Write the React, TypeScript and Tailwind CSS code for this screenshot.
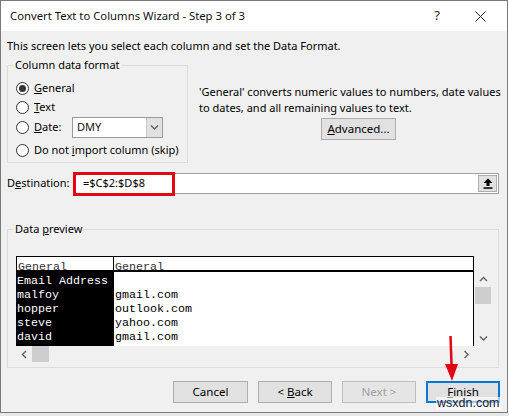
import React from "react"

const UI = "font-['Noto_Sans',sans-serif]"
const MONO = "font-['Liberation_Mono','Courier_New',monospace]"

function Radio({ checked = false }: { checked?: boolean }) {
  return (
    <span className="w-[13px] h-[13px] shrink-0 rounded-full border border-[#333] bg-white flex items-center justify-center">
      {checked && <span className="w-[7px] h-[7px] rounded-full bg-[#333]" />}
    </span>
  )
}

function Chevron({ dir }: { dir: "up" | "down" | "left" | "right" }) {
  const d = {
    up: "M1 5 L4.5 1.5 L8 5",
    down: "M1 1.5 L4.5 5 L8 1.5",
    left: "M5 1 L1.5 4.5 L5 8",
    right: "M1.5 1 L5 4.5 L1.5 8",
  }[dir]
  const vertical = dir === "up" || dir === "down"
  return (
    <svg width={vertical ? 9 : 7} height={vertical ? 7 : 9} viewBox={vertical ? "0 0 9 7" : "0 0 7 9"}>
      <path d={d} fill="none" stroke="#606060" strokeWidth="1.4" />
    </svg>
  )
}

function Btn({ children, disabled = false, primary = false, w = "w-[75px]" }: {
  children: React.ReactNode
  disabled?: boolean
  primary?: boolean
  w?: string
}) {
  return (
    <div
      className={`${w} h-[22px] flex items-center justify-center text-[11.5px] ${
        primary
          ? "border-2 border-[#0078d7] bg-[#e1e1e1] text-black"
          : disabled
          ? "border border-[#bfbfbf] bg-[#e5e5e5] text-[#a0a0a0]"
          : "border border-[#adadad] bg-[#e1e1e1] text-black"
      }`}
    >
      {children}
    </div>
  )
}

const ROWS = [
  ["Email Address", ""],
  ["malfoy", "gmail.com"],
  ["hopper", "outlook.com"],
  ["steve", "yahoo.com"],
  ["david", "gmail.com"],
]

export default function App() {
  return (
    <div className={`w-[509px] h-[416px] bg-white relative overflow-hidden ${UI} text-[11px] text-black`}>
      <div className="w-[508px] h-[413px] border border-[#7a7a7a] bg-[#f0f0f0] flex flex-col">
        {/* title bar */}
        <div className="h-[30px] bg-white flex items-center shrink-0">
          <span className="ml-[9px] text-[11.3px] text-[#111]">Convert Text to Columns Wizard - Step 3 of 3</span>
          <span className="ml-auto mr-[35px] text-[13px] text-[#222]">?</span>
          <svg width="11" height="11" viewBox="0 0 11 11" className="mr-[21px]">
            <path d="M0.5 0.5 L10.5 10.5 M10.5 0.5 L0.5 10.5" stroke="#222" strokeWidth="1" />
          </svg>
        </div>

        <div className="px-[6px] pt-[7px] h-[23px] leading-[16px]">
          This screen lets you select each column and set the Data Format.
        </div>

        {/* format + description */}
        <div className="flex mt-[11px] h-[98px]">
          <div className="relative ml-[6px] w-[181px] h-[98px] border border-[#dcdcdc]">
            <span className="absolute left-[5px] top-[-9px] px-[2px] bg-[#f0f0f0] leading-[16px]">Column data format</span>
            <div className="flex flex-col pl-[8px] pt-[13px]">
              <div className="h-[18px] flex items-center gap-[5px]">
                <Radio checked />
                <span><u>G</u>eneral</span>
              </div>
              <div className="h-[20px] flex items-center gap-[5px]">
                <Radio />
                <span><u>T</u>ext</span>
              </div>
              <div className="h-[21px] flex items-center">
                <Radio />
                <span className="ml-[5px] w-[38px]"><u>D</u>ate:</span>
                <div className="w-[91px] h-[21px] border border-[#9a9a9a] bg-white flex items-center">
                  <span className="ml-[4px] text-[#111]">DMY</span>
                  <div className="ml-auto w-[16px] h-full bg-[#e1e1e1] border-l border-[#c8c8c8] flex items-center justify-center">
                    <Chevron dir="down" />
                  </div>
                </div>
              </div>
              <div className="h-[18px] mt-[3px] flex items-center gap-[5px] whitespace-nowrap">
                <Radio />
                <span>Do not <u>i</u>mport column (skip)</span>
              </div>
            </div>
          </div>
          <div className="flex-1 pl-[11px] pt-[19px] leading-[16px] whitespace-nowrap">
            <div>'General' converts numeric values to numbers, date values</div>
            <div>to dates, and all remaining values to text.</div>
            <div className="ml-[122px] mt-[2px]">
              <Btn><span><u>A</u>dvanced...</span></Btn>
            </div>
          </div>
        </div>

        {/* destination */}
        <div className="flex items-center mt-[10px] h-[21px]">
          <span className="ml-[6px] w-[66px]">D<u>e</u>stination:</span>
          <div className="relative w-[426px] h-[21px] border border-[#a0a0a0] bg-white flex items-center">
            <span className="ml-[9px]">=$C$2:$D$8</span>
            <div className="ml-auto mr-[1px] w-[19px] h-[17px] bg-[#e1e1e1] border border-[#adadad] flex items-center justify-center">
              <svg width="10" height="11" viewBox="0 0 10 11">
                <path d="M5 0.5 L9.5 5 L6.5 5 L6.5 8 L3.5 8 L3.5 5 L0.5 5 Z" fill="#000" />
                <rect x="0.5" y="9.3" width="9" height="1.5" fill="#000" />
              </svg>
            </div>
            <div className="absolute left-[-1px] top-[-2px] w-[102px] h-[24px] border-[3px] border-[#e30613]" />
          </div>
        </div>

        {/* data preview */}
        <div className="relative ml-[6px] mt-[35px] w-[492px] h-[139px] border border-[#dcdcdc]">
          <span className="absolute left-[5px] top-[-9px] px-[2px] bg-[#f0f0f0] leading-[16px]">Data <u>p</u>review</span>
          <div className="ml-[8px] mt-[26px] flex">
            <div className="w-[458px]">
              <div className={`h-[16px] border border-b-2 border-black bg-white flex ${MONO} text-[11.67px] leading-[14px] overflow-hidden`}>
                <div className="w-[97px] border-r border-black pt-[3px] pl-[1px] text-[#333]">General</div>
                <div className="pt-[3px] pl-[1px] text-[#333]">General</div>
              </div>
              <div className={`h-[74px] border-r border-black bg-white overflow-hidden ${MONO} text-[11.67px] leading-[14px]`}>
                <div className="flex h-full">
                  <div className="w-[98px] bg-black text-white border-r border-black pt-[2px] pl-[1px]">
                    {ROWS.map((r) => (
                      <div key={r[0]} className="h-[14px] whitespace-pre">{r[0]}</div>
                    ))}
                  </div>
                  <div className="pt-[2px] pl-[1px]">
                    {ROWS.map((r) => (
                      <div key={r[0]} className="h-[14px] whitespace-pre">{r[1]}</div>
                    ))}
                  </div>
                </div>
              </div>
              <div className="h-[16px] flex items-center">
                <div className="w-[16px] flex justify-center"><Chevron dir="left" /></div>
                <div className="w-[17px] h-[16px] bg-[#cdcdcd]" />
                <div className="ml-auto w-[16px] flex justify-center"><Chevron dir="right" /></div>
              </div>
            </div>
            <div className="ml-[1px] mt-[16px] w-[16px] h-[74px] flex flex-col">
              <div className="h-[15px] flex items-center justify-center"><Chevron dir="up" /></div>
              <div className="h-[17px] bg-[#cdcdcd]" />
              <div className="mt-auto h-[15px] flex items-center justify-center"><Chevron dir="down" /></div>
            </div>
          </div>
        </div>

        {/* buttons */}
        <div className="flex mt-[13px] ml-[172px] gap-[10px]">
          <Btn>Cancel</Btn>
          <Btn w="w-[74px]"><span>&lt; <u>B</u>ack</span></Btn>
          <Btn w="w-[74px]" disabled>Next &gt;</Btn>
          <Btn w="w-[74px]" primary><span><u>F</u>inish</span></Btn>
        </div>
      </div>

      {/* annotation arrow */}
      <svg className="absolute left-[443px] top-[336px]" width="18" height="46" viewBox="0 0 18 46">
        <path d="M7.5 0 L8.6 31" stroke="#e30613" strokeWidth="2.5" fill="none" />
        <path d="M2 28 L15 28 L9 45 Z" fill="#e30613" />
      </svg>

      {/* watermark */}
      <span className="absolute left-[436px] top-[397px] px-[1px] leading-[13px] text-[12.5px] text-[#1a1a2e] bg-white/60 font-['Liberation_Sans',sans-serif]">
        wsxdn.com
      </span>

      {/* bottom shadow */}
      <div className="absolute left-0 top-[413px] w-[509px] h-[3px] bg-[#e8e8e8]" />
    </div>
  )
}
